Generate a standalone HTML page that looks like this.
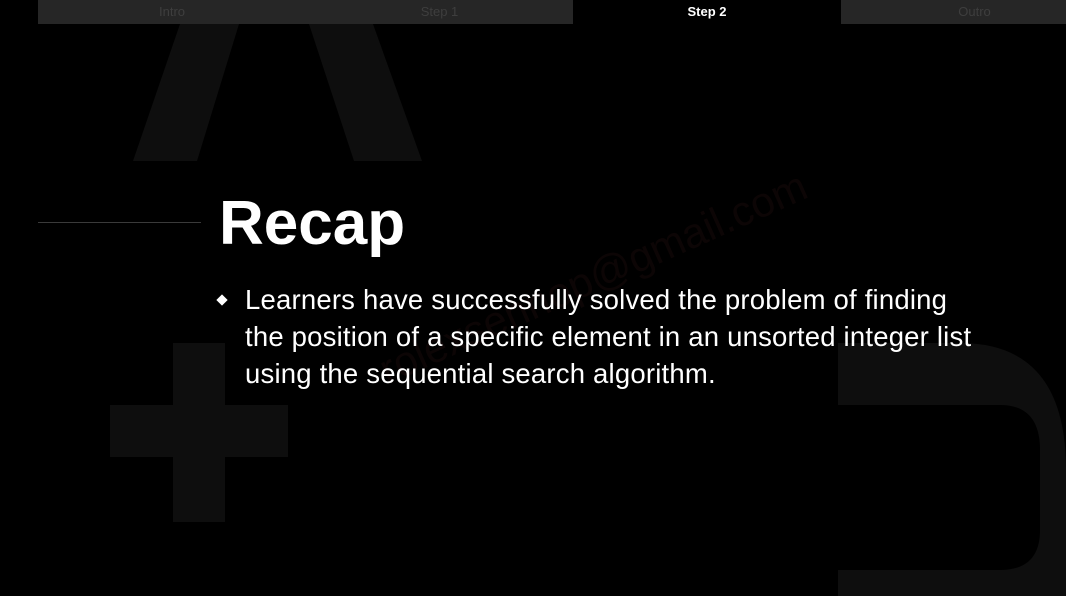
<!DOCTYPE html>
<html><head><meta charset="utf-8"><style>
*{margin:0;padding:0;box-sizing:border-box}
body{width:1066px;height:596px;background:#000;position:relative;overflow:hidden;font-family:"Liberation Sans",sans-serif}
.tab{position:absolute;top:0;height:24px;background:#262626;color:#3e3e3e;font-size:13px;text-align:center;line-height:24px}
.tab.a{background:#000;color:#fff;font-weight:bold}
.line{position:absolute;left:38px;top:222px;width:163px;height:1px;background:#3a3a3a}
h1{position:absolute;left:219px;top:188px;font-size:62px;font-weight:bold;color:#fff;letter-spacing:0px}
.txt{position:absolute;left:245px;top:281px;width:780px;font-size:27.5px;line-height:37px;color:#fff;letter-spacing:0.2px}
.dot{position:absolute;left:218px;top:296px;width:8px;height:8px;background:#fff;transform:rotate(45deg)}
.wm{position:absolute;left:372px;top:350px;font-size:42px;color:#0c0505;transform:rotate(-24deg);transform-origin:left top;white-space:nowrap}
</style></head><body>
<svg width="1066" height="596" style="position:absolute;left:0;top:0">
<g fill="#0e0e0e">
<polygon points="180,24 239,24 197,161 133,161"/>
<polygon points="309,24 373,24 422,161 354,161"/>
<rect x="173" y="343" width="52" height="179"/>
<rect x="110" y="405" width="178" height="52"/>
<path d="M838 343 H960 Q1066 343 1066 470 V600 H838 Z"/>
</g>
<path d="M838 405 H1000 Q1040 405 1040 450 V530 Q1040 570 1000 570 H838 Z" fill="#000"/>
</svg>
<div class="wm">rolexsennop@gmail.com</div>
<div class="tab" style="left:38px;width:268px">Intro</div>
<div class="tab" style="left:306px;width:267px">Step 1</div>
<div class="tab a" style="left:573px;width:268px">Step 2</div>
<div class="tab" style="left:841px;width:225px;padding-left:42px">Outro</div>
<div class="line"></div>
<h1>Recap</h1>
<div class="dot"></div>
<div class="txt">Learners have successfully solved the problem of finding<br>the position of a specific element in an unsorted integer list<br>using the sequential search algorithm.</div>
</body></html>
